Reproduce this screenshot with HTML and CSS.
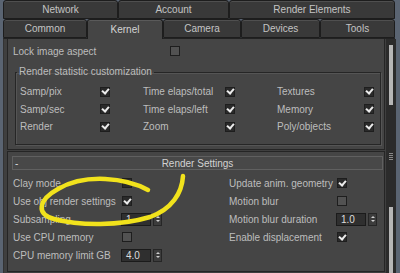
FILE: index.html
```html
<!DOCTYPE html>
<html lang="en">
  <head>
    <meta charset="UTF-8" />
    <title>Render Setup - Kernel</title>
    <link rel="stylesheet" href="styles.css">
  </head>
  <body>
    <div class="app">
      <div class="tabs">
        <div class="tab tab-network">Network</div>
        <div class="tab tab-account">Account</div>
        <div class="tab tab-elements">Render Elements</div>
      </div>
      <div class="tabs">
        <div class="tab tab-common">Common</div>
        <div class="tab tab-kernel active">Kernel</div>
        <div class="tab tab-camera">Camera</div>
        <div class="tab tab-devices">Devices</div>
        <div class="tab tab-tools">Tools</div>
      </div>

      <div class="panel">
        <div class="content">
          <div class="rollout rollout-kernel">
            <div class="lock-row">
              <span class="lock-label">Lock image aspect</span>
              <span class="cb"></span>
            </div>
            <fieldset class="group">
              <legend>Render statistic customization</legend>
              <div class="stats">
                <span>Samp/pix</span><span class="cb on"></span>
                <span>Time elaps/total</span><span class="cb on"></span>
                <span>Textures</span><span class="cb on"></span>
                <span>Samp/sec</span><span class="cb on"></span>
                <span>Time elaps/left</span><span class="cb on"></span>
                <span>Memory</span><span class="cb on"></span>
                <span>Render</span><span class="cb on"></span>
                <span>Zoom</span><span class="cb on"></span>
                <span>Poly/objects</span><span class="cb on"></span>
              </div>
            </fieldset>
          </div>

          <div class="rollout rollout-settings">
            <div class="roll-head">
              <span class="minus">-</span>
              <span class="roll-title">Render Settings</span>
              <span></span>
            </div>
            <div class="settings">
              <span>Clay mode</span>
              <span class="cb dark"></span>
              <span>Update anim. geometry</span>
              <span class="cb on"></span>

              <span>Use obj render settings</span>
              <span class="cb on"></span>
              <span>Motion blur</span>
              <span class="cb"></span>

              <span>Subsampling</span>
              <div class="spin">
                <span class="spin-value">1</span>
                <span class="spin-arrows"><i class="up"></i><i class="down"></i></span>
              </div>
              <span>Motion blur duration</span>
              <div class="spin">
                <span class="spin-value">1.0</span>
                <span class="spin-arrows"><i class="up"></i><i class="down"></i></span>
              </div>

              <span>Use CPU memory</span>
              <span class="cb"></span>
              <span>Enable displacement</span>
              <span class="cb on"></span>

              <span>CPU memory limit GB</span>
              <div class="spin">
                <span class="spin-value">4.0</span>
                <span class="spin-arrows"><i class="up"></i><i class="down"></i></span>
              </div>
              <span></span>
              <span></span>
            </div>
          </div>
        </div>

        <div class="scroll">
          <div class="track">
            <div class="thumb"><span class="grip"></span></div>
          </div>
        </div>
      </div>

      <!-- yellow marker scribble drawn over the screenshot -->
      <svg class="marker" width="400" height="273" viewBox="0 0 400 273">
        <path d="M148,190 C126,178 86,173 58,189 C38,200 36,214 54,219 C80,226 120,226 150,217 C172,209 182,193 183,176"
          fill="none" stroke="#f1e21c" stroke-width="4.5" stroke-linecap="round" />
      </svg>
    </div>
  </body>
</html>
```

FILE: styles.css
```css
* {
  box-sizing: border-box;
}

body {
  margin: 0;
  width: 400px;
  height: 273px;
  overflow: hidden;
  background-color: #5a6472;
  font-family: "Liberation Sans", Arial, sans-serif;
  font-size: 10px;
  color: #bdbdbd;
}

.app {
  position: relative;
  margin-left: 3px;
  width: 392px;
  height: 273px;
}

/* tabs */

.tabs {
  display: flex;
  height: 19px;
}

.tab {
  display: flex;
  justify-content: center;
  align-items: center;
  height: 19px;
  background-color: #393939;
  border: 1px solid #1d1d1d;
  border-radius: 3px 3px 0 0;
  box-shadow: inset 0 1px 0 #4f4f4f;
  color: #c4c4c4;
}

.tab-network { width: 115px; }
.tab-account { width: 111px; }
.tab-elements { width: 166px; }
.tab-common { width: 84px; }
.tab-kernel { width: 76px; }
.tab-camera { width: 78px; }
.tab-devices { width: 79px; }
.tab-tools { width: 75px; }

.tab.active {
  position: relative;
  z-index: 1;
  height: 20px;
  background-color: #454545;
  border-bottom: none;
  box-shadow: inset 0 1px 0 #5a5a5a;
  color: #d4d4d4;
}

/* panel */

.panel {
  display: flex;
  height: 235px;
  background-color: #3f3f3f;
  border-top: 1px solid #222;
  border-left: 1px solid #333;
}

.content {
  flex: 1;
  padding-left: 3px;
}

.rollout {
  width: 378px;
  background-color: #454545;
  border: 1px solid #252525;
}

.rollout-kernel {
  height: 111px;
  padding-top: 5px;
  border-top: none;
}

.lock-row {
  display: flex;
  align-items: center;
  height: 14px;
  padding-left: 5px;
}

.lock-label {
  width: 157px;
}

.group {
  margin: 8px 3px 0 7px;
  padding: 5px 0 8px 4px;
  border: 1px solid #262626;
  box-shadow: 1px 1px 0 #555, inset 1px 1px 0 #555;
}

.group legend {
  margin-left: -3px;
  padding: 0 2px;
  line-height: 12px;
}

.stats {
  display: grid;
  grid-template-columns: 80px 43px 82px 52px 87px 10px;
  grid-auto-rows: 17.5px;
  align-items: center;
}

/* checkboxes */

.cb {
  display: flex;
  justify-content: center;
  align-items: center;
  width: 10px;
  height: 10px;
  background-color: #525252;
  border: 1px solid #1e1e1e;
}

.cb.dark,
.cb.on {
  background-color: #2a2a2a;
}

.cb.on::after {
  content: "";
  width: 3px;
  height: 5px;
  margin-top: -2px;
  border-right: 2px solid #ececec;
  border-bottom: 2px solid #ececec;
  transform: rotate(40deg);
}

/* render settings */

.rollout-settings {
  height: 121px;
  margin-top: 1px;
  padding-top: 4px;
}

.roll-head {
  display: grid;
  grid-template-columns: 1fr auto 1fr;
  align-items: center;
  height: 14px;
  margin: 0 1px 0 4px;
  background-color: #484848;
  border: 1px solid #606060;
  color: #d2d2d2;
}

.minus {
  padding-left: 2px;
  color: #dcdcdc;
}

.settings {
  display: grid;
  grid-template-columns: 109px 107px 108px 1fr;
  grid-auto-rows: 18px;
  align-items: center;
  padding: 4px 0 0 5px;
}

.spin {
  display: flex;
  align-items: center;
  gap: 2px;
  margin-left: -1px;
}

.spin-value {
  width: 30px;
  height: 13px;
  padding-left: 4px;
  line-height: 11px;
  background-color: #2f2f2f;
  border: 1px solid #1b1b1b;
  color: #dcdcdc;
}

.spin-arrows {
  display: flex;
  flex-direction: column;
  justify-content: center;
  align-items: center;
  gap: 2px;
  width: 9px;
  height: 13px;
  background-color: #3c3c3c;
  border: 1px solid #262626;
}

.spin-arrows i {
  width: 0;
  height: 0;
  border-left: 2px solid transparent;
  border-right: 2px solid transparent;
}

.spin-arrows .up {
  border-bottom: 2px solid #cfcfcf;
}

.spin-arrows .down {
  border-top: 2px solid #cfcfcf;
}

/* scrollbar */

.scroll {
  width: 10px;
  margin-left: 1px;
  padding: 6px 3px 0;
  background-color: #2b2b2b;
}

.track {
  height: 100%;
  padding-top: 60px;
  background-color: #b6b6b6;
}

.thumb {
  display: flex;
  justify-content: center;
  align-items: center;
  height: 102px;
  background-color: #2b2b2b;
}

.grip {
  width: 4px;
  height: 7px;
  background: repeating-linear-gradient(#888 0 1px, transparent 1px 2px);
}

.marker {
  position: absolute;
  top: 0;
  left: -3px;
  pointer-events: none;
}
```
